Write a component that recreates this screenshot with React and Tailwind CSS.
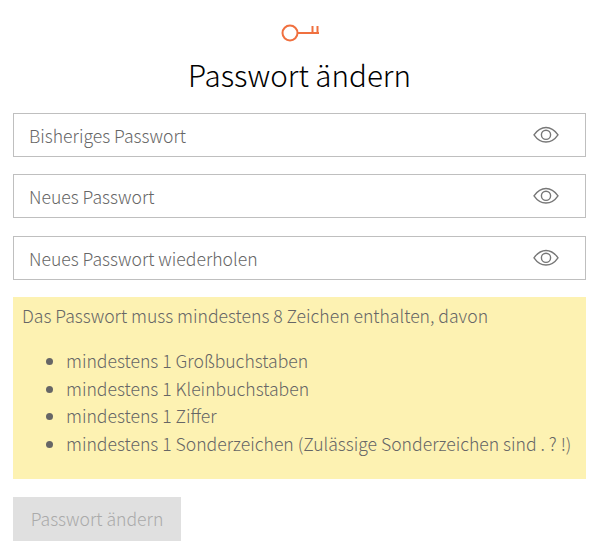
const fields = [
  { name: "current", label: "Bisheriges Passwort", spacing: "mt-[18px]" },
  { name: "next", label: "Neues Passwort", spacing: "mt-[17px]" },
  { name: "repeat", label: "Neues Passwort wiederholen", spacing: "mt-[18px]" },
];

const rules = [
  "mindestens 1 Großbuchstaben",
  "mindestens 1 Kleinbuchstaben",
  "mindestens 1 Ziffer",
  "mindestens 1 Sonderzeichen (Zulässige Sonderzeichen sind . ? !)",
];

function KeyIcon() {
  return (
    <svg width="40" height="20" viewBox="0 0 40 20" fill="none" stroke="#f0703f" strokeWidth="2">
      <circle cx="10" cy="10" r="7.5" />
      <path d="M17.5 10H39M37.5 10V3M32.5 10V3" />
    </svg>
  );
}

function EyeIcon() {
  return (
    <svg width="26" height="18" viewBox="0 0 26 18" fill="none" stroke="#777" strokeWidth="1.4">
      <path d="M1 8.8C4.5 4 8.5 1.5 13 1.5S21.5 4 25 8.8C21.5 13.8 17.5 16 13 16S4.5 13.8 1 8.8Z" />
      <circle cx="13" cy="8.8" r="4.6" />
    </svg>
  );
}

function PasswordField({ label, spacing }) {
  return (
    <div className={`flex h-11 items-center justify-between border border-[#bfbfbf] pr-[26px] pl-[15px] ${spacing}`}>
      <span className="text-[17.6px] leading-[27px] text-[#666]">{label}</span>
      <button type="button" aria-label="Passwort anzeigen">
        <EyeIcon />
      </button>
    </div>
  );
}

export default function App() {
  return (
    <div className="h-[553px] bg-white pt-[23px] pr-2 pl-[13px] font-['Noto_Sans_CJK_SC',sans-serif] font-light">
      <header className="flex flex-col items-center">
        <KeyIcon />
        <h1 className="mt-[11px] text-[29.6px] leading-[41px] text-black">Passwort ändern</h1>
      </header>

      <form>
        {fields.map((field) => (
          <PasswordField key={field.name} label={field.label} spacing={field.spacing} />
        ))}

        <div className="mt-[17px] h-[182px] bg-[#fdf2b2] px-[9px] pt-[5px] text-[17.6px] leading-[27.5px] text-[#666]">
          <p>Das Passwort muss mindestens 8 Zeichen enthalten, davon</p>
          <ul className="mt-[17.5px] list-disc pl-[44px]">
            {rules.map((rule) => (
              <li key={rule} className="whitespace-nowrap">{rule}</li>
            ))}
          </ul>
        </div>

        <button
          type="button"
          disabled
          className="mt-[18px] flex h-11 w-[168px] items-center justify-center bg-[#e0e0e0] text-[17.6px] text-[#aaa]"
        >
          Passwort ändern
        </button>
      </form>
    </div>
  );
}
